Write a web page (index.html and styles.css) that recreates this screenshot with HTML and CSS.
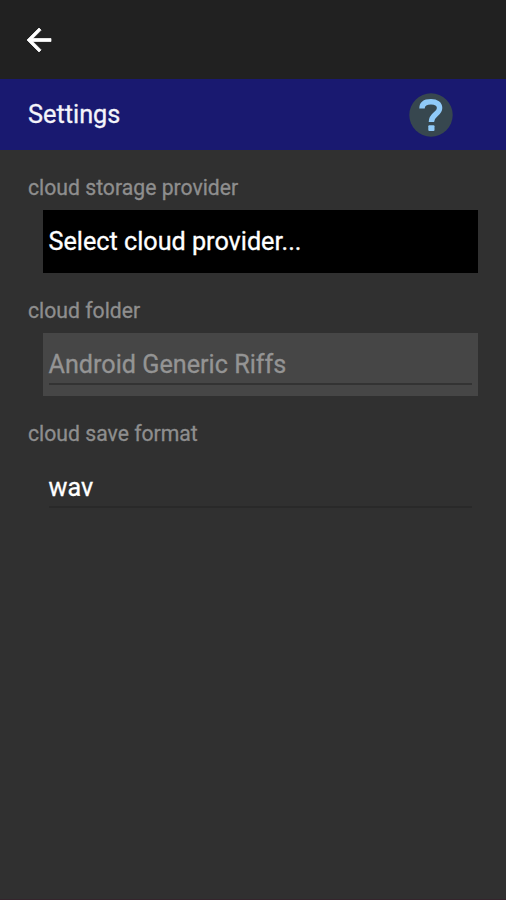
FILE: index.html
```
<!DOCTYPE html>
<html lang="en">
<head>
<meta charset="utf-8">
<title>Settings</title>
<link rel="stylesheet" href="styles.css">
</head>
<body>
<main class="screen">
  <nav class="toolbar">
    <svg class="back" viewBox="0 0 24 24" aria-label="Back"><path d="M20 11H7.83l5.59-5.59L12 4l-8 8 8 8 1.41-1.41L7.83 13H20v-2z"/></svg>
  </nav>
  <header class="titlebar">
    <h1 class="title">Settings</h1>
    <svg class="help" viewBox="0 0 44 44" aria-label="Help">
      <circle cx="22" cy="22" r="21.7"/>
      <path d="M13 15.5C13 10.5 17 8.7 22 8.7C27.5 8.7 30.6 11 30.6 15C30.6 21.5 22.4 21 22.4 29"/>
      <rect x="19.3" y="32.2" width="6.2" height="5.8" rx="1"/>
    </svg>
  </header>
  <section class="form">
    <div class="label">cloud storage provider</div>
    <div class="field provider"><span class="value">Select cloud provider...</span></div>
    <div class="label">cloud folder</div>
    <div class="field folder"><span class="value line">Android Generic Riffs</span></div>
    <div class="label">cloud save format</div>
    <div class="field format"><span class="value line">wav</span></div>
  </section>
</main>
</body>
</html>
```

FILE: styles.css
```
* { box-sizing: border-box; }
body { margin: 0; background: #303030; font-family: Roboto, sans-serif; -webkit-text-stroke: .3px currentColor; }
.screen { height: 900px; display: flex; flex-direction: column; border-bottom: 1px solid #35242c; }
.toolbar { height: 79px; padding-left: 21px; background: #212121; display: flex; align-items: center; }
.back { width: 36px; height: 36px; fill: #fff; stroke: #fff; stroke-width: .5; stroke-linejoin: round; }
.titlebar { height: 71px; padding: 0 53px 0 28px; background: #191970; display: flex; align-items: center; justify-content: space-between; }
.title { margin: 0; font-size: 25.3px; font-weight: 400; line-height: 30px; color: #f4f4fa; }
.help { width: 44px; height: 44px; }
.help circle { fill: #37474f; }
.help path { fill: none; stroke: #90caf9; stroke-width: 5.4; }
.help rect { fill: #90caf9; }
.form { padding: 23px 28px 0; }
.label { height: 30px; margin-bottom: 7px; font-size: 21.2px; line-height: 30px; color: #8e8e8e; white-space: nowrap; }
.field { height: 63px; margin: 0 0 23px 15px; padding: 0 6px 0 5.5px; font-size: 25.2px; color: #fff; white-space: nowrap; }
.value { display: block; height: 52px; line-height: 64px; }
.line { border-bottom: 2px solid #292929; }
.provider { background: #000; }
.folder { background: #464646; color: #949494; }
.folder .line { border-color: #333; }
```
